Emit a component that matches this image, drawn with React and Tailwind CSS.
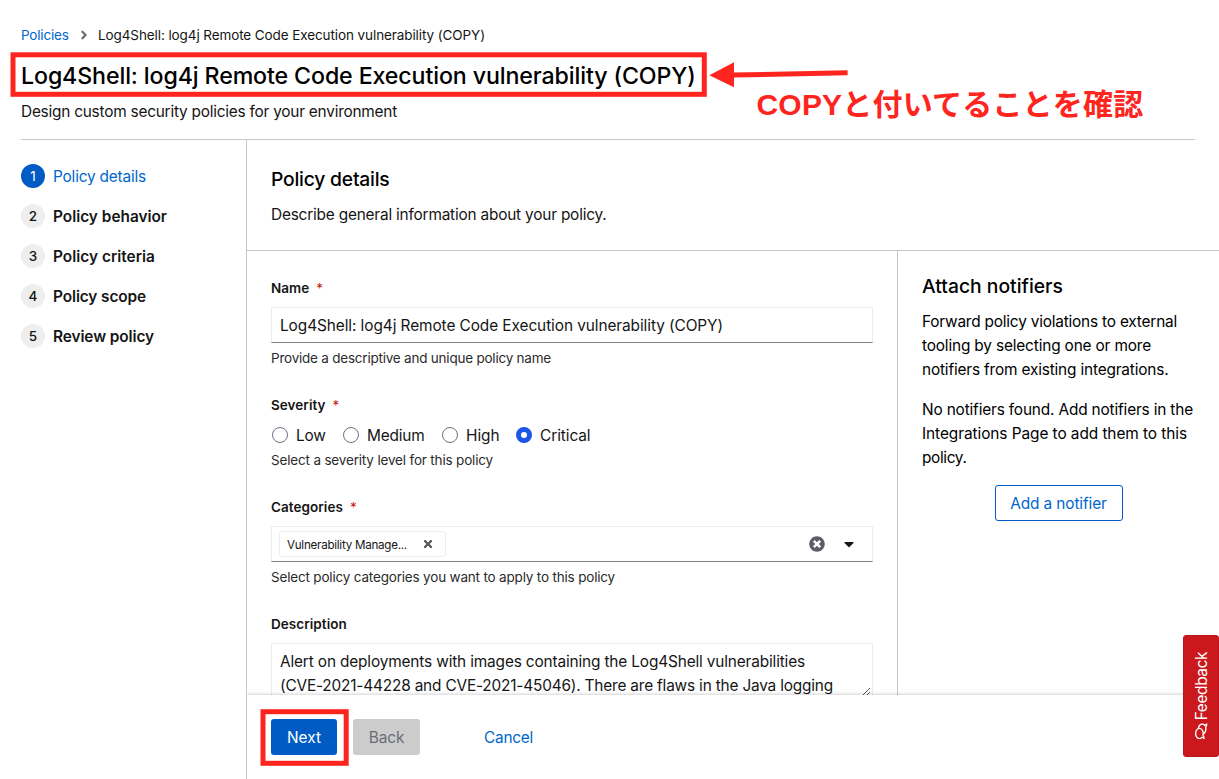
import { FaAngleRight, FaCaretDown, FaRegComments, FaTimes, FaTimesCircle } from 'react-icons/fa';

const steps = [
  { label: 'Policy details', tracking: 'tracking-[-0.19px]' },
  { label: 'Policy behavior', tracking: 'tracking-[-0.01px]' },
  { label: 'Policy criteria', tracking: 'tracking-[0.02px]' },
  { label: 'Policy scope', tracking: 'tracking-[-0.11px]' },
  { label: 'Review policy', tracking: 'tracking-[-0.09px]' },
];

const severities = [
  { label: 'Low', tracking: 'tracking-[-0.25px]' },
  { label: 'Medium', tracking: 'tracking-[-0.18px]' },
  { label: 'High', tracking: 'tracking-[-0.05px]' },
  { label: 'Critical', tracking: 'tracking-[-0.07px]' },
];

function Label({ children, required }) {
  return (
    <div className="flex h-5 items-center text-[13.5px] font-semibold tracking-[0.05px]">
      {children}
      {required && <span className="ml-[7px] font-normal text-[#c9190b]">*</span>}
    </div>
  );
}

function Helper({ children, className }) {
  return <p className={`mt-[5px] h-5 text-[13.5px] leading-5 text-[#2b2b2b] ${className}`}>{children}</p>;
}

function Header() {
  return (
    <header className="mx-[21px] mr-6 h-[140px] shrink-0 border-b border-[#c7c7c7] pt-[25px]">
      <nav className="flex h-5 items-center text-[13.5px]">
        <a className="w-[48px] tracking-[-0.2px] text-[#0066cc]">Policies</a>
        <FaAngleRight className="mr-[7px] ml-2 size-[14px] text-[#6a6e73]" />
        <span className="tracking-[-0.096px]">Log4Shell: log4j Remote Code Execution vulnerability (COPY)</span>
      </nav>
      <h1 className="mt-[15px] h-8 text-[23.2px] leading-8 font-medium tracking-[-0.12px] text-black">
        Log4Shell: log4j Remote Code Execution vulnerability (COPY)
      </h1>
      <p className="mt-2 text-[15.4px] leading-6 tracking-[-0.229px]">
        Design custom security policies for your environment
      </p>
    </header>
  );
}

function Steps() {
  return (
    <ol className="flex w-[247px] shrink-0 flex-col gap-4 border-r border-[#c7c7c7] pt-6 pl-[21px]">
      {steps.map((step, i) => (
        <li key={step.label} className="flex h-6 items-center gap-2 text-[15.4px]">
          <span
            className={`flex size-6 items-center justify-center rounded-full text-[13.5px] ${
              i === 0 ? 'bg-[#005bc4] text-white' : 'bg-[#eeeeee] font-medium'
            }`}
          >
            {i + 1}
          </span>
          <span className={`pt-[2px] ${i === 0 ? 'text-[#0066cc]' : 'font-semibold'} ${step.tracking}`}>
            {step.label}
          </span>
        </li>
      ))}
    </ol>
  );
}

function Form() {
  return (
    <form className="w-[650px] shrink-0 px-6 pt-[27px]">
      <Label required>Name</Label>
      <div className="mt-[9px] flex h-9 items-center border border-[#ececec] border-b-[#7f7f83] px-2 pt-[2px] text-[15.4px] tracking-[-0.078px]">
        Log4Shell: log4j Remote Code Execution vulnerability (COPY)
      </div>
      <Helper className="tracking-[-0.221px]">Provide a descriptive and unique policy name</Helper>

      <div className="mt-[27px]">
        <Label required>Severity</Label>
        <div className="mt-2 mb-[7px] ml-px grid h-5 grid-cols-[71px_99px_74px_auto] text-[15.4px]">
          {severities.map((s) => (
            <label key={s.label} className="flex items-center gap-2">
              <input
                type="radio"
                name="severity"
                defaultChecked={s.label === 'Critical'}
                className="size-4 appearance-none rounded-full border border-[#6b7280] bg-white checked:border-[5px] checked:border-[#1c56e8]"
              />
              <span className={`pt-px ${s.tracking}`}>{s.label}</span>
            </label>
          ))}
        </div>
        <Helper className="tracking-[-0.174px]">Select a severity level for this policy</Helper>
      </div>

      <div className="mt-[27px]">
        <Label required>Categories</Label>
        <div className="mt-[9px] flex h-9 items-center border border-[#ececec] border-b-[#7f7f83] pr-[18px] pl-[7px]">
          <span className="flex h-[26px] w-[167px] items-center rounded-[3px] border border-[#ececec] pl-[7px] text-[11.6px]">
            <span className="w-[135px] pt-[3px] tracking-[-0.25px]">Vulnerability Manage...</span>
            <FaTimes className="size-3 text-[#55585c]" />
          </span>
          <FaTimesCircle className="mr-[19px] ml-auto size-4 text-[#5c6066]" />
          <FaCaretDown className="size-4 w-[10px]" />
        </div>
        <Helper className="tracking-[-0.182px]">Select policy categories you want to apply to this policy</Helper>
      </div>

      <div className="mt-[27px]">
        <Label>Description</Label>
        <div className="relative mt-[9px] h-[56px] border border-[#ececec] px-2 pt-[6px] text-[15.4px] leading-6 whitespace-nowrap">
          <p className="tracking-[-0.152px]">Alert on deployments with images containing the Log4Shell vulnerabilities</p>
          <p className="tracking-[-0.185px]">(CVE-2021-44228 and CVE-2021-45046). There are flaws in the Java logging</p>
          <svg className="absolute right-px bottom-[2px] size-[9px]" viewBox="0 0 9 9" fill="none" stroke="#555">
            <path d="M0.5 8.5L8 1M4.5 8.5L8 5" />
          </svg>
        </div>
      </div>
    </form>
  );
}

function Notifiers() {
  return (
    <aside className="flex-1 border-l border-[#c7c7c7] pt-[22px] pr-6 pl-6 text-[15.4px] leading-6 whitespace-nowrap text-black">
      <h2 className="h-[26px] text-[19.3px] leading-[26px] font-medium tracking-[0.01px]">Attach notifiers</h2>
      <p className="mt-[11px]">
        <span className="block tracking-[-0.199px]">Forward policy violations to external</span>
        <span className="block tracking-[-0.162px]">tooling by selecting one or more</span>
        <span className="block tracking-[-0.168px]">notifiers from existing integrations.</span>
      </p>
      <p className="mt-4">
        <span className="block tracking-[-0.163px]">No notifiers found. Add notifiers in the</span>
        <span className="block tracking-[-0.063px]">Integrations Page to add them to this</span>
        <span className="block tracking-[-0.359px]">policy.</span>
      </p>
      <button className="mx-auto mt-[15px] flex h-9 w-32 items-center justify-center rounded-[3px] border border-[#005bc4] pt-[2px] tracking-[-0.11px] text-[#0066cc]">
        Add a notifier
      </button>
    </aside>
  );
}

function Footer() {
  return (
    <footer className="z-10 flex h-[84px] shrink-0 items-start bg-white px-6 pt-6 text-[15.4px] shadow-[0_-1px_3px_rgba(0,0,0,0.18)]">
      <button className="h-9 w-[66px] rounded-[3px] bg-[#005bc4] pt-[2px] text-white">Next</button>
      <button className="ml-4 h-9 w-[67px] rounded-[3px] bg-[#cccccc] pt-[2px] tracking-[-0.11px] text-[#6a6e73]">
        Back
      </button>
      <button className="ml-16 h-9 pt-[2px] tracking-[-0.247px] text-[#0066cc]">Cancel</button>
    </footer>
  );
}

function Annotations() {
  return (
    <div className="pointer-events-none absolute inset-0 z-20 text-[#ff251f]">
      <svg className="absolute inset-0" width="1219" height="779" fill="none" stroke="currentColor" strokeWidth="5">
        <rect x="13" y="54.8" width="691.3" height="39.5" />
        <rect x="263" y="711.7" width="83.2" height="51.6" />
        <path d="M733 75L847.6 72.8" />
        <path d="M709.3 75.2L734 62.2V87.2Z" fill="currentColor" stroke="none" />
      </svg>
      <p className="absolute top-[83px] left-[756.5px] font-['Liberation_Sans','Noto_Sans_CJK_JP',sans-serif] text-[30px] leading-[44px] font-bold tracking-[0.2px] whitespace-nowrap">
        COPYと付いてることを確認
      </p>
    </div>
  );
}

export default function App() {
  return (
    <div className="relative flex h-[779px] w-[1219px] flex-col overflow-hidden bg-white font-['Inter',sans-serif] text-[#151515]">
      <Header />
      <div className="flex min-h-0 flex-1">
        <Steps />
        <div className="flex min-w-0 flex-1 flex-col overflow-hidden">
          <div className="h-[111px] shrink-0 border-b border-[#c7c7c7] px-6 pt-[26px]">
            <h2 className="h-[26px] text-[19.3px] leading-[26px] font-medium tracking-[-0.219px] text-black">Policy details</h2>
            <p className="mt-[11px] text-[15.4px] leading-6 tracking-[-0.2px]">Describe general information about your policy.</p>
          </div>
          <div className="flex min-h-0 flex-1 overflow-hidden">
            <Form />
            <Notifiers />
          </div>
          <Footer />
        </div>
      </div>
      <button className="absolute top-[635px] left-[1183px] z-20 flex h-[122px] w-9 items-center justify-center rounded-[3px] border border-[#b8161a] bg-[#cb181c] text-white">
        <span className="flex -rotate-90 items-center gap-[3px] text-[15.4px] tracking-[-0.35px] whitespace-nowrap">
          <FaRegComments className="size-4 shrink-0" />
          <span className="pt-[2px]">Feedback</span>
        </span>
      </button>
      <Annotations />
    </div>
  );
}
